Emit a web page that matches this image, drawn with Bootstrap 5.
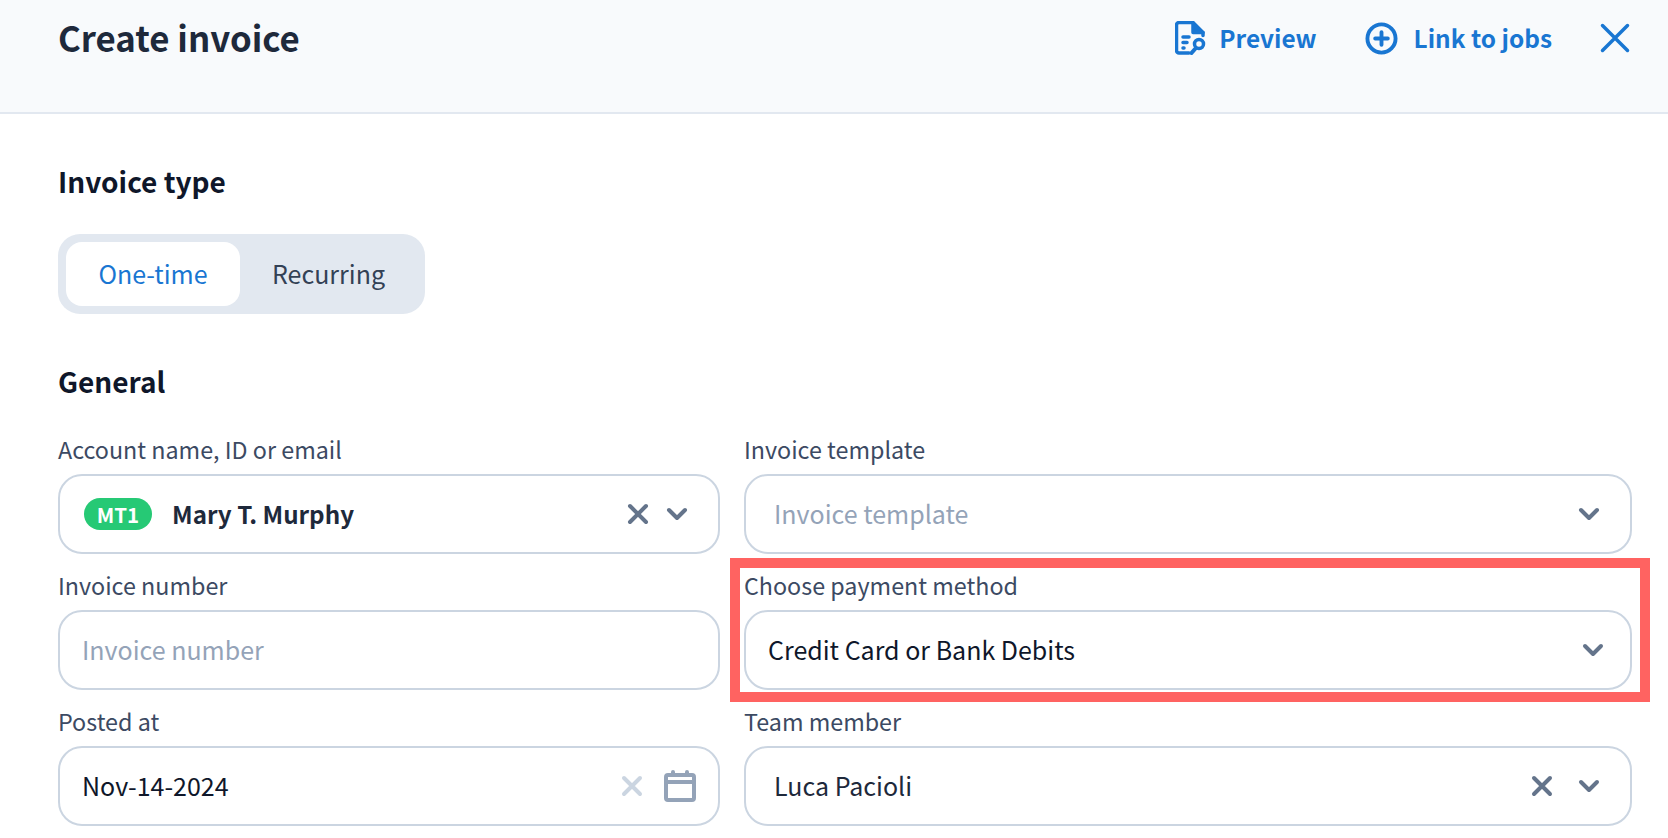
<!DOCTYPE html>
<html lang="en">
<head>
<meta charset="UTF-8">
<meta name="viewport" content="width=device-width, initial-scale=1.0">
<title>Create invoice</title>
<link rel="stylesheet" href="https://cdn.jsdelivr.net/npm/bootstrap@5.3.0/dist/css/bootstrap.min.css">
<style>
    html, body { height: 100%; }
    body {
        background: #fff;
        font-family: "Noto Sans CJK JP", "Noto Sans", sans-serif;
        color: #0f172a;
        overflow: hidden;
    }
    .page-head {
        height: 114px;
        padding: 12px 38px 0 58px;
        background: #f8fafc;
        border-bottom: 2px solid #e2e8f0;
    }
    .head-title { font-size: 34.800px; line-height: 50px; font-weight: 700; color: #1e293b; margin: 0; }
    .head-link { color: #1976d2; font-size: 24.400px; font-weight: 700; line-height: 50px; text-decoration: none; height: 54px; margin-top: -1px; }
    .link-gap { margin-left: 13px; }
    .page-body { padding: 47px 36px 0 58px; }
    .sec-title { font-size: 28px; line-height: 40px; font-weight: 700; color: #0f172a; margin: 0; }
    .type-switch { width: 367px; height: 80px; padding: 8px; background: #e2e8f0; border-radius: 22px; margin: 33px 0 47px; }
    .type-opt { font-size: 25px; height: 64px; line-height: 62px; color: #334155; text-align: center; }
    .type-opt.is-on { width: 174px; background: #fff; border-radius: 16px; color: #1976d2; }
    .type-opt.is-off { flex: 1; }
    .field-grid { display: grid; grid-template-columns: 662px 888px; column-gap: 24px; margin-top: 30px; }
    .field-cell { height: 136px; position: relative; }
    .field-label { font-size: 23.300px; line-height: 36px; color: #3c4a63; margin: 0 0 7px; display: block; }
    .field-box {
        height: 80px;
        border: 2px solid #cbd5e1;
        border-radius: 24px;
        font-size: 25px;
        background: #fff;
    }
    .val-dark { color: #0f172a; }
    .val-soft { color: #1e293b; }
    .val-bold { color: #1e293b; font-weight: 700; font-size: 24.200px; }
    .val-hint { color: #94a3b8; }
    .acct-pill { background: #26c975; color: #fff; font-size: 20.500px; font-weight: 700; line-height: 32px; height: 32px; width: 68px; border-radius: 16px; text-align: center; margin-right: 20px; }
    .pad-a { padding-left: 24px; padding-right: 30px; }
    .pad-b { padding-left: 22px; padding-right: 26px; }
    .pad-c { padding-left: 28px; padding-right: 30px; }
    .pad-d { padding-left: 22px; padding-right: 22px; }
    .gap-x { margin-right: 20px; }
    .gap-team { margin-right: 24px; }
    .red-mark { position: absolute; left: -14px; right: -18px; top: -9px; height: 144px; border: 10px solid #ff6361; pointer-events: none; }
</style>
</head>
<body>

<div class="page-head d-flex justify-content-between align-items-start">
    <h1 class="head-title">Create invoice</h1>
    <div class="d-flex align-items-center">
        <a class="head-link d-flex align-items-center" href="#">
            <svg width="31" height="34" viewBox="0 0 31 34" fill="none" stroke="#1976d2" stroke-width="3.500" stroke-linecap="round" stroke-linejoin="round">
                <path d="M14 32H4a2.500 2.500 0 0 1-2.500-2.500V4A2.500 2.500 0 0 1 4 1.500h14L28 11.500v3"/>
                <path d="M18 2v9.500h10" fill="#1976d2"/>
                <path d="M8 16h6M8 21.500h4M8 27h1"/>
                <circle cx="24" cy="23" r="4.500"/>
                <path d="M20 28L16.500 32" stroke-width="4"/>
            </svg>
            <span class="link-gap">Preview</span>
        </a>
        <a class="head-link d-flex align-items-center ms-5" href="#">
            <svg width="33" height="33" viewBox="0 0 34 34" fill="none" stroke="#1976d2" stroke-width="4" stroke-linecap="round">
                <circle cx="17" cy="17" r="14.500"/>
                <path d="M17 10.500v13M10.500 17h13"/>
            </svg>
            <span class="ms-3">Link to jobs</span>
        </a>
        <a class="head-link d-flex align-items-center ms-5" href="#" aria-label="Close">
            <svg width="30" height="30" viewBox="0 0 30 30" fill="none" stroke="#1976d2" stroke-width="3.500" stroke-linecap="round">
                <path d="M2.500 2.500l25 25M27.500 2.500l-25 25"/>
            </svg>
        </a>
    </div>
</div>

<div class="page-body">
    <h2 class="sec-title">Invoice type</h2>
    <div class="type-switch d-flex">
        <div class="type-opt is-on">One-time</div>
        <div class="type-opt is-off">Recurring</div>
    </div>

    <h2 class="sec-title">General</h2>

    <div class="field-grid">
        <div class="field-cell">
            <label class="field-label">Account name, ID or email</label>
            <div class="field-box d-flex align-items-center pad-a">
                <span class="acct-pill">MT1</span>
                <span class="val-bold flex-grow-1">Mary T. Murphy</span>
                <svg class="me-3" width="24" height="24" viewBox="0 0 24 24" fill="none" stroke="#64748b" stroke-width="4" stroke-linecap="round"><path d="M4 4l16 16M20 4L4 20"/></svg>
                <svg width="22" height="14" viewBox="0 0 22 14" fill="none" stroke="#64748b" stroke-width="4" stroke-linecap="round" stroke-linejoin="round"><path d="M3 3l8 8 8-8"/></svg>
            </div>
        </div>
        <div class="field-cell">
            <label class="field-label">Invoice template</label>
            <div class="field-box d-flex align-items-center justify-content-between pad-c">
                <span class="val-hint">Invoice template</span>
                <svg width="22" height="14" viewBox="0 0 22 14" fill="none" stroke="#64748b" stroke-width="4" stroke-linecap="round" stroke-linejoin="round"><path d="M3 3l8 8 8-8"/></svg>
            </div>
        </div>
        <div class="field-cell">
            <label class="field-label">Invoice number</label>
            <div class="field-box d-flex align-items-center pad-b">
                <span class="val-hint">Invoice number</span>
            </div>
        </div>
        <div class="field-cell">
            <label class="field-label">Choose payment method</label>
            <div class="field-box d-flex align-items-center justify-content-between pad-b">
                <span class="val-dark">Credit Card or Bank Debits</span>
                <svg width="22" height="14" viewBox="0 0 22 14" fill="none" stroke="#64748b" stroke-width="4" stroke-linecap="round" stroke-linejoin="round"><path d="M3 3l8 8 8-8"/></svg>
            </div>
            <div class="red-mark"></div>
        </div>
        <div class="field-cell">
            <label class="field-label">Posted at</label>
            <div class="field-box d-flex align-items-center pad-d">
                <span class="val-dark flex-grow-1">Nov-14-2024</span>
                <svg class="gap-x" width="24" height="24" viewBox="0 0 24 24" fill="none" stroke="#cbd5e1" stroke-width="4" stroke-linecap="round"><path d="M4 4l16 16M20 4L4 20"/></svg>
                <svg width="32" height="32" viewBox="0 0 32 32" fill="none" stroke="#94a3b8" stroke-width="4" stroke-linecap="round" stroke-linejoin="round">
                    <rect x="2" y="5" width="28" height="25" rx="2"/>
                    <path d="M2 12h28" />
                    <path d="M9 2v3M23 2v3"/>
                </svg>
            </div>
        </div>
        <div class="field-cell">
            <label class="field-label">Team member</label>
            <div class="field-box d-flex align-items-center pad-c">
                <span class="val-soft flex-grow-1">Luca Pacioli</span>
                <svg class="gap-team" width="24" height="24" viewBox="0 0 24 24" fill="none" stroke="#64748b" stroke-width="4" stroke-linecap="round"><path d="M4 4l16 16M20 4L4 20"/></svg>
                <svg width="22" height="14" viewBox="0 0 22 14" fill="none" stroke="#64748b" stroke-width="4" stroke-linecap="round" stroke-linejoin="round"><path d="M3 3l8 8 8-8"/></svg>
            </div>
        </div>
    </div>
</div>

<script src="https://cdn.jsdelivr.net/npm/bootstrap@5.3.0/dist/js/bootstrap.bundle.min.js"></script>
</body>
</html>
